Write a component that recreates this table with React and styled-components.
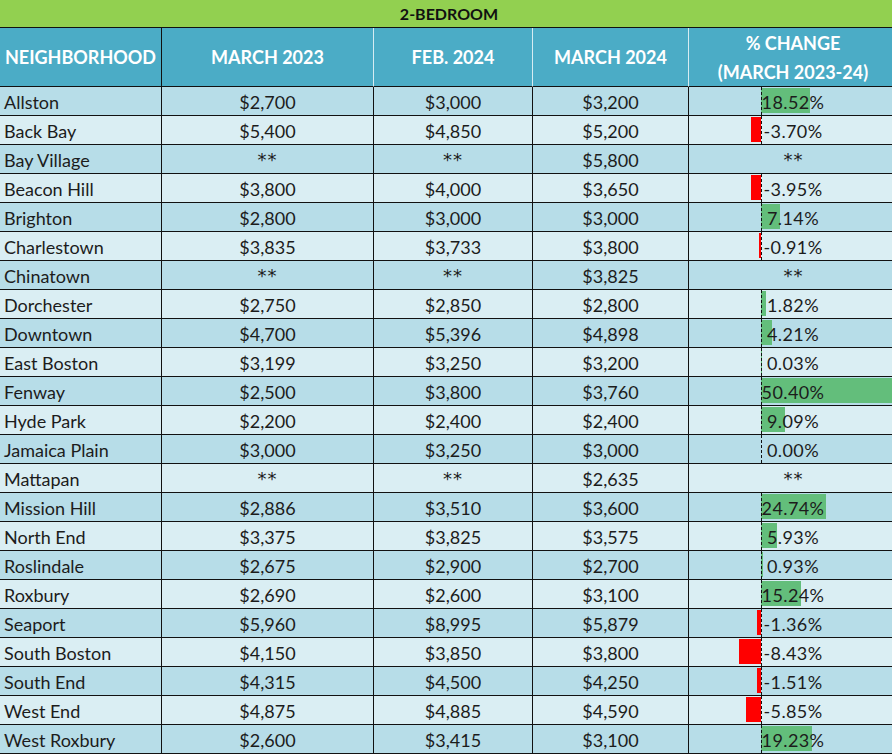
import styled, { createGlobalStyle } from 'styled-components'

const GlobalStyle = createGlobalStyle`
  body {
    margin: 0;
    overflow: hidden;
    background: #ffffff;
    font-family: Lato, 'Open Sans', sans-serif;
  }
`

const rows = [
  ['Allston', '$2,700', '$3,000', '$3,200', 18.52],
  ['Back Bay', '$5,400', '$4,850', '$5,200', -3.7],
  ['Bay Village', '**', '**', '$5,800', null],
  ['Beacon Hill', '$3,800', '$4,000', '$3,650', -3.95],
  ['Brighton', '$2,800', '$3,000', '$3,000', 7.14],
  ['Charlestown', '$3,835', '$3,733', '$3,800', -0.91],
  ['Chinatown', '**', '**', '$3,825', null],
  ['Dorchester', '$2,750', '$2,850', '$2,800', 1.82],
  ['Downtown', '$4,700', '$5,396', '$4,898', 4.21],
  ['East Boston', '$3,199', '$3,250', '$3,200', 0.03],
  ['Fenway', '$2,500', '$3,800', '$3,760', 50.4],
  ['Hyde Park', '$2,200', '$2,400', '$2,400', 9.09],
  ['Jamaica Plain', '$3,000', '$3,250', '$3,000', 0.0],
  ['Mattapan', '**', '**', '$2,635', null],
  ['Mission Hill', '$2,886', '$3,510', '$3,600', 24.74],
  ['North End', '$3,375', '$3,825', '$3,575', 5.93],
  ['Roslindale', '$2,675', '$2,900', '$2,700', 0.93],
  ['Roxbury', '$2,690', '$2,600', '$3,100', 15.24],
  ['Seaport', '$5,960', '$8,995', '$5,879', -1.36],
  ['South Boston', '$4,150', '$3,850', '$3,800', -8.43],
  ['South End', '$4,315', '$4,500', '$4,250', -1.51],
  ['West End', '$4,875', '$4,885', '$4,590', -5.85],
  ['West Roxbury', '$2,600', '$3,415', '$3,100', 19.23],
]

// px per percentage point, axis offset inside the change cell
const SCALE = 2.63
const AXIS = 72

const Sheet = styled.div`
  width: 898px;
`

const TitleBar = styled.div`
  height: 27px;
  background: #92d050;
  border-bottom: 1px solid #111;
  display: flex;
  align-items: center;
  justify-content: center;
  font-weight: 700;
  font-size: 16px;
  color: #111;
`

const Grid = styled.div`
  display: grid;
  grid-template-columns: 162px 212px 159px 156px 209px;
`

const HeadCell = styled.div`
  height: 57px;
  background: #4bacc6;
  color: #ffffff;
  font-weight: 700;
  font-size: 18px;
  line-height: 29px;
  display: flex;
  flex-direction: column;
  align-items: center;
  justify-content: center;
  text-align: center;
  white-space: nowrap;
  border-bottom: 1px solid #111;
  border-right: 1px solid ${(p) => (p.$dark ? '#111' : '#d6ecf2')};
  padding-top: 1px;
`

const Cell = styled.div`
  box-sizing: border-box;
  height: 29px;
  padding-top: 2px;
  background: ${(p) => (p.$odd ? '#b7dde8' : '#daeef3')};
  border-bottom: 1px solid #111;
  border-right: 1px solid #111;
  display: flex;
  align-items: center;
  justify-content: ${(p) => (p.$left ? 'flex-start' : 'center')};
  padding-left: ${(p) => (p.$left ? '4px' : '0')};
  font-size: 18px;
  color: #1c1c1c;
  white-space: nowrap;
`

const Stars = styled.span`
  font-family: 'DejaVu Sans', sans-serif;
  font-size: 18px;
  letter-spacing: 1px;
  margin-top: -2px;
`

const ChangeCell = styled(Cell)`
  position: relative;
  border-right: none;
`

const Bar = styled.div`
  position: absolute;
  top: 1px;
  bottom: 2px;
  background: ${(p) => (p.$neg ? '#ff0000' : '#63be7b')};
`

const Axis = styled.div`
  position: absolute;
  top: 0;
  bottom: 0;
  left: ${AXIS}px;
  border-left: 1px dashed #111;
`

const ChangeText = styled.span`
  position: relative;
  letter-spacing: 0.4px;
  margin-right: 1px;
`

const fmt = (v) => `${v.toFixed(2)}%`

const Value = ({ v }) => (v === '**' ? <Stars>**</Stars> : v)

function ChangeBar({ value, odd }) {
  if (value === null) {
    return (
      <ChangeCell $odd={odd}>
        <Stars>**</Stars>
      </ChangeCell>
    )
  }
  const w = Math.abs(value) * SCALE
  const neg = value < 0
  return (
    <ChangeCell $odd={odd}>
      <Bar $neg={neg} style={{ left: neg ? AXIS - w : AXIS, width: w }} />
      <Axis />
      <ChangeText>{fmt(value)}</ChangeText>
    </ChangeCell>
  )
}

export default function App() {
  return (
    <Sheet>
      <GlobalStyle />
      <TitleBar>2-BEDROOM</TitleBar>
      <Grid>
        <HeadCell $dark>NEIGHBORHOOD</HeadCell>
        <HeadCell>MARCH 2023</HeadCell>
        <HeadCell>FEB. 2024</HeadCell>
        <HeadCell>MARCH 2024</HeadCell>
        <HeadCell>
          <span>% CHANGE</span>
          <span>(MARCH 2023-24)</span>
        </HeadCell>
        {rows.map(([name, a, b, c, pct], i) => {
          const odd = i % 2 === 0
          return [
            <Cell key={name + '-n'} $odd={odd} $left>
              {name}
            </Cell>,
            <Cell key={name + '-a'} $odd={odd}><Value v={a} /></Cell>,
            <Cell key={name + '-b'} $odd={odd}><Value v={b} /></Cell>,
            <Cell key={name + '-c'} $odd={odd}><Value v={c} /></Cell>,
            <ChangeBar key={name + '-p'} value={pct} odd={odd} />,
          ]
        })}
      </Grid>
    </Sheet>
  )
}
